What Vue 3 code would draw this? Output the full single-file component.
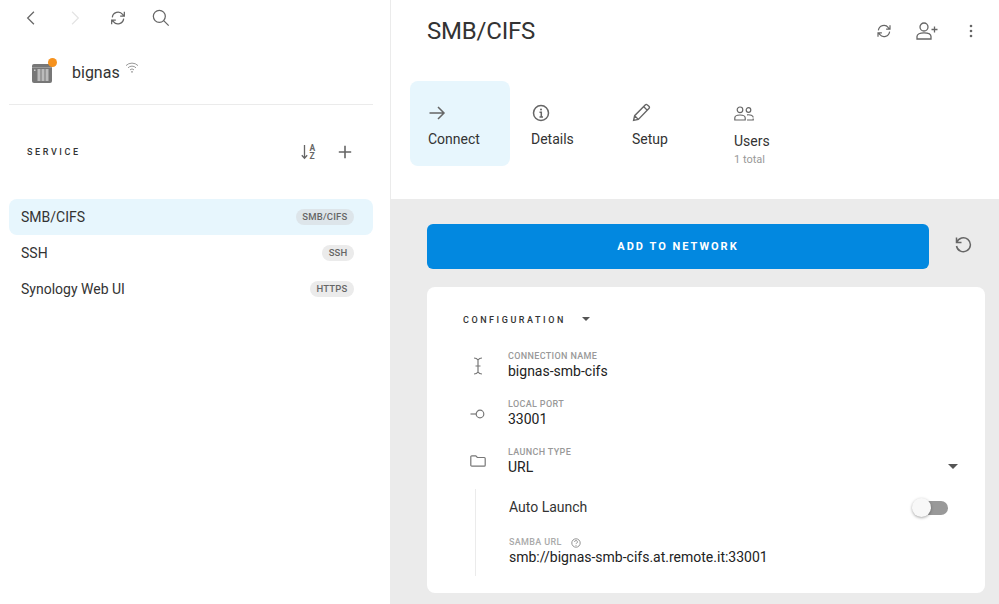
<script setup>
const services = [
  { name: 'SMB/CIFS', tag: 'SMB/CIFS', active: true },
  { name: 'SSH', tag: 'SSH', active: false },
  { name: 'Synology Web UI', tag: 'HTTPS', active: false },
]
</script>

<template>
  <div class="app">
    <aside class="side">
      <div class="nav">
        <svg class="i24 nav1" viewBox="0 0 24 24"><path d="M15.500 4.500 8 12l7.500 7.500" /></svg>
        <svg class="i24 nav2 dim" viewBox="0 0 24 24"><path d="M8.500 4.500 16 12l-7.500 7.500" /></svg>
        <svg class="i24 nav3" viewBox="0 0 24 24"><path d="M5.200 11.200a6.900 6.900 0 0 1 12.300-3.600l1.700 2M19.600 4.600v5h-5M18.800 12.800a6.900 6.900 0 0 1-12.300 3.600l-1.700-2M4.400 19.400v-5h5" /></svg>
        <svg class="i24 nav4" viewBox="0 0 24 24"><circle cx="10" cy="10" r="7.200" /><path d="m15.200 15.200 6 6" /></svg>
      </div>
      <div class="device">
        <span class="dev-icon">
          <svg width="22" height="20" viewBox="0 0 22 20">
            <path d="M3 1h16a2 2 0 0 1 2 2v15a2 2 0 0 1-2 2H3a2 2 0 0 1-2-2V3a2 2 0 0 1 2-2z" fill="#777" />
            <rect x="1" y="4" width="20" height="1" fill="#999" />
            <rect x="6.500" y="6" width="3" height="12" fill="#bbb" />
            <rect x="10.500" y="6" width="3" height="12" fill="#bbb" />
            <rect x="14.500" y="6" width="3" height="12" fill="#bbb" />
            <rect x="3" y="6.500" width="1.500" height="1.500" fill="#ccc" />
          </svg>
          <i class="dot"></i>
        </span>
        <span class="dev-name">bignas</span>
        <svg class="wifi" viewBox="0 0 14 12"><path d="M1 3.600a8.500 8.500 0 0 1 12 0M3 5.800a5.600 5.600 0 0 1 8 0M5 7.900a2.800 2.800 0 0 1 4 0" /><circle cx="7" cy="9.800" r=".9" fill="#999" stroke="none" /></svg>
      </div>
      <div class="side-head">
        <span class="overline">SERVICE</span>
        <span class="side-actions">
          <svg class="sort" viewBox="0 0 18 16">
            <path d="M3.500 1v13M.8 11.200l2.700 3 2.700-3" />
            <text x="8.500" y="6.500" class="az">A</text>
            <text x="8.500" y="14.800" class="az">Z</text>
          </svg>
          <svg class="plus" viewBox="0 0 14 14"><path d="M7 .8v12.400M.8 7h12.400" /></svg>
        </span>
      </div>
      <ul class="list">
        <li v-for="s in services" :key="s.name" class="item" :class="{ active: s.active }">
          <span>{{ s.name }}</span>
          <span class="tag">{{ s.tag }}</span>
        </li>
      </ul>
    </aside>

    <main class="main">
      <div class="top">
        <header class="head">
          <h1>SMB/CIFS</h1>
          <div class="head-actions">
            <svg class="i18" viewBox="0 0 24 24"><path d="M4.500 11.200a7.500 7.500 0 0 1 13.300-3.800l1.700 2M20 4.400v5.200h-5.200M19.500 12.800a7.500 7.500 0 0 1-13.300 3.800l-1.700-2M4 19.600v-5.200h5.200" /></svg>
            <svg class="person" viewBox="0 0 22 18"><circle cx="8" cy="5" r="4" /><path d="M1 17v-2.500C1 12 4 10.800 8 10.800s7 1.200 7 3.700V17zM15.500 7.500h6M18.500 4.500v6" /></svg>
            <svg class="dots" viewBox="0 0 4 14"><circle cx="2" cy="2" r="1.300" /><circle cx="2" cy="7" r="1.300" /><circle cx="2" cy="12" r="1.300" /></svg>
          </div>
        </header>
        <nav class="tabs">
          <div class="tab t1 active">
            <svg class="i18" viewBox="0 0 18 18"><path d="M1.500 9h14.500M10 3l6 6-6 6" /></svg>
            <span>Connect</span>
          </div>
          <div class="tab t2">
            <svg class="i18" viewBox="0 0 18 18"><circle cx="9" cy="9" r="7.500" /><path d="M7.500 8.300H9.300V13M7.500 13h3.500" /><circle cx="9" cy="5.500" r="1" class="solid" /></svg>
            <span>Details</span>
          </div>
          <div class="tab t3">
            <svg class="pencil" viewBox="0 0 18 18"><path d="M1.500 16.500l1-4.500L12.500 1.800a1.500 1.500 0 0 1 2.100 0l1.400 1.300a1.500 1.500 0 0 1 0 2.100L6 15.500zM2.500 12 6 15.500M11 3.300 14.500 7" /></svg>
            <span>Setup</span>
          </div>
          <div class="tab t4">
            <svg class="users" viewBox="0 0 20 15"><circle cx="6" cy="3.800" r="2.800" /><circle cx="14.500" cy="4" r="2.300" /><path d="M.8 14v-2c0-2 2.200-3 5.200-3s5.200 1 5.200 3v2zM13 8.800c3.400-.3 6.200.6 6.200 2.700M13 14h6.200v-1.500" /></svg>
            <span class="users-label">Users</span>
            <small>1 total</small>
          </div>
        </nav>
      </div>

      <section class="body">
        <div class="cta">
          <button class="primary">ADD TO NETWORK</button>
          <svg class="undo" viewBox="0 0 20 20"><path d="M3.500 4.500v5h5M3.800 9.300a7 7 0 1 1-.3 3.700" /></svg>
        </div>
        <div class="card">
          <div class="conf">
            <span class="overline">CONFIGURATION</span>
            <i class="caret small"></i>
          </div>
          <div class="field f1">
            <svg class="field-i cursor" viewBox="0 0 12 18"><path d="M2 1c2 0 3 .5 4 2 1-1.500 2-2 4-2M2 17c2 0 3-.5 4-2 1 1.500 2 2 4 2M6 3v12M3.500 9h5" /></svg>
            <div>
              <label>CONNECTION NAME</label>
              <p>bignas-smb-cifs</p>
            </div>
          </div>
          <div class="field f2">
            <svg class="field-i port" viewBox="0 0 16 10"><circle cx="10" cy="5" r="3.800" /><path d="M.5 5h5.700" /></svg>
            <div>
              <label>LOCAL PORT</label>
              <p>33001</p>
            </div>
          </div>
          <div class="field f3">
            <svg class="field-i folder" viewBox="0 0 16 12"><path d="M.8 1.800A1 1 0 0 1 1.800.8h4l1.500 1.700h7a.9.9 0 0 1 .9.900v6.800a1 1 0 0 1-1 1H1.800a1 1 0 0 1-1-1z" /></svg>
            <div class="grow">
              <label>LAUNCH TYPE</label>
              <p>URL</p>
            </div>
            <i class="caret"></i>
          </div>
          <div class="nested">
            <div class="auto">
              <span>Auto Launch</span>
              <span class="switch"><i></i></span>
            </div>
            <div class="samba">
              <label>SAMBA URL
                <svg class="help" viewBox="0 0 10 10"><circle cx="5" cy="5" r="4.200" /><path d="M3.600 3.900a1.400 1.400 0 1 1 2.100 1.200c-.5.300-.7.500-.7 1" /><circle cx="5" cy="7.400" r=".5" class="solid" /></svg>
              </label>
              <p>smb://bignas-smb-cifs.at.remote.it:33001</p>
            </div>
          </div>
        </div>
      </section>
    </main>
  </div>
</template>

<style>
html, body { margin: 0; overflow: hidden; background: #fff; }
</style>

<style scoped>
.app {
  display: flex;
  width: 999px;
  height: 604px;
  overflow: hidden;
  font-family: Roboto, "Liberation Sans", sans-serif;
  color: #222;
}
svg { fill: none; stroke: #666; stroke-width: 1.5; display: block; flex: none; }
.solid { fill: #666; stroke: none; }

.side { width: 391px; flex: none; border-right: 1px solid #ebebeb; box-sizing: border-box; }
.nav { height: 36px; display: flex; align-items: center; padding-left: 21px; }
.i24 { width: 20px; height: 20px; }
.nav2 { margin-left: 24px; }
.nav3 { margin-left: 23px; }
.nav4 { margin-left: 23px; }
.dim { stroke: #e4e4e4; }
.device { height: 62px; padding-top: 6px; margin: 0 17px 0 9px; padding-left: 22px; display: flex; align-items: center; border-bottom: 1px solid #ebebeb; }
.dev-icon { position: relative; width: 22px; height: 20px; }
.dev-icon svg { stroke: none; }
.dot { position: absolute; right: -4px; top: -5px; width: 9px; height: 9px; border-radius: 50%; background: #f6921e; }
.dev-name { margin-left: 19px; font-size: 16px; line-height: 24px; color: #333; }
.wifi { width: 14px; height: 12px; margin: -10px 0 0 5px; stroke: #999; stroke-width: 1; }
.side-head { height: 94px; display: flex; align-items: center; justify-content: space-between; padding: 0 38px 0 27px; box-sizing: border-box; }
.overline { font-size: 9px; font-weight: 500; letter-spacing: 2.600px; color: #333; }
.side-actions { display: flex; align-items: center; gap: 19px; }
.sort { width: 18px; height: 16px; stroke-width: 1.300; }
.az { font-family: Roboto, sans-serif; font-size: 8.500px; font-weight: 700; fill: #666; stroke: none; }
.plus { width: 14px; height: 14px; stroke-width: 1.600; }
.list { list-style: none; margin: 0 17px 0 9px; padding: 0; }
.item { height: 36px; padding: 0 19px 1px 12px; box-sizing: border-box; display: flex; align-items: center; justify-content: space-between; border-radius: 8px; font-size: 14px; color: #333; }
.item.active { background: #e7f6fd; }
.tag { height: 16px; line-height: 16px; padding: 0 6.500px; border-radius: 8px; background: #ebebeb; font-size: 9.500px; font-weight: 500; letter-spacing: .2px; color: #666; }
.item.active .tag { background: #dde5ea; }

.main { flex: 1; min-width: 0; display: flex; flex-direction: column; }
.top { height: 199px; flex: none; }
.head { height: 81px; padding: 0 26px 0 36px; display: flex; justify-content: space-between; align-items: flex-start; box-sizing: border-box; }
h1 { margin: 17px 0 0; font-size: 24px; line-height: 28px; font-weight: 400; letter-spacing: -.2px; color: #333; }
.head-actions { display: flex; align-items: center; gap: 23px; margin-top: 22px; }
.head-actions .i18 { width: 18px; height: 18px; stroke-width: 1.600; }
.person { width: 22px; height: 18px; stroke-width: 1.300; }
.dots { width: 4px; height: 14px; margin-left: 8px; stroke: none; fill: #666; }
.tabs { display: flex; padding-left: 19px; height: 85px; }
.tab { box-sizing: border-box; height: 85px; padding: 23px 18px 0; font-size: 14px; color: #333; display: flex; flex-direction: column; align-items: flex-start; }
.tab .i18 { width: 18px; height: 18px; }
.tab .pencil { width: 19px; height: 19px; stroke-width: 1.300; margin-top: -1px; }
.tab span { margin-top: 8px; line-height: 18px; }
.t1 { width: 100px; border-radius: 8px; background: #e7f6fd; }
.t2 { width: 100px; padding-left: 22px; }
.t2 span { margin-left: -1px; }
.t3 { width: 102px; padding-left: 22px; }
.t4 { padding-left: 22px; }
.users { width: 20px; height: 15px; margin: 2px 0 1px; stroke-width: 1.200; }
.tab .users-label { margin-top: 10px; }
small { font-size: 11px; line-height: 15px; color: #999; margin-top: 2px; }

.body { flex: 1; background: #ebebeb; padding: 25px 14px 11px 36px; min-height: 0; }
.cta { display: flex; align-items: center; height: 45px; }
.primary { width: 502px; height: 45px; border: 0; border-radius: 6px; background: #0288e0; color: #fff; font-family: inherit; font-size: 11px; font-weight: 700; letter-spacing: 2px; padding: 0; }
.undo { width: 20px; height: 20px; margin: -8px 0 0 24px; stroke-width: 1.500; }
.card { margin-top: 18px; height: 306px; background: #fff; border-radius: 8px; position: relative; }
.conf { display: flex; align-items: center; padding: 28px 0 0 36px; height: 10px; }
.conf .overline { font-size: 9px; letter-spacing: 2.550px; }
.caret { width: 0; height: 0; border: 5px solid transparent; border-top: 5px solid #555; border-bottom: 0; display: block; margin-top: 8px; }
.caret.small { margin-left: 16px; margin-top: -2px; border-width: 4px 4.500px 0; border-top-color: #555; border-left-color: transparent; border-right-color: transparent; }
.field { display: flex; align-items: center; padding-left: 81px; height: 32px; position: relative; }
.field > div { align-self: flex-start; padding-top: 1px; }
.field p { margin-top: -1px; }
.f1 { margin-top: 25px; }
.f2 { margin-top: 16px; }
.f3 { margin-top: 16px; padding-right: 27px; }
.grow { flex: 1; }
.field-i { position: absolute; stroke-width: 1.200; stroke: #777; }
.cursor { left: 45px; top: 7px; width: 12px; height: 18px; }
.port { left: 43px; top: 11px; width: 16px; height: 10px; }
.folder { left: 43px; top: 9px; width: 16px; height: 12px; }
label { display: flex; align-items: center; gap: 9px; font-size: 9px; line-height: 11px; font-weight: 500; letter-spacing: .35px; color: #999; }
p { margin: 0; font-size: 14px; line-height: 20px; color: #222; }
.nested { margin: 11px 0 0 48px; padding: 0 37px 0 33px; border-left: 1px solid #ebebeb; height: 87px; }
.auto { display: flex; justify-content: space-between; align-items: center; height: 36px; font-size: 14px; color: #333; }
.switch { width: 35px; height: 14px; border-radius: 7px; background: #999; position: relative; margin-top: 2px; }
.switch i { position: absolute; left: -1px; top: -3px; width: 19px; height: 19px; border-radius: 50%; background: #f8f8f8; box-shadow: 0 1px 3px rgba(0, 0, 0, .35); }
.samba { margin-top: 12px; }
.samba p { margin-top: -1px; }
.samba label { color: #aaa; }
.help { width: 10px; height: 10px; stroke: #888; stroke-width: .9; }
.help .solid { fill: #888; }
</style>
